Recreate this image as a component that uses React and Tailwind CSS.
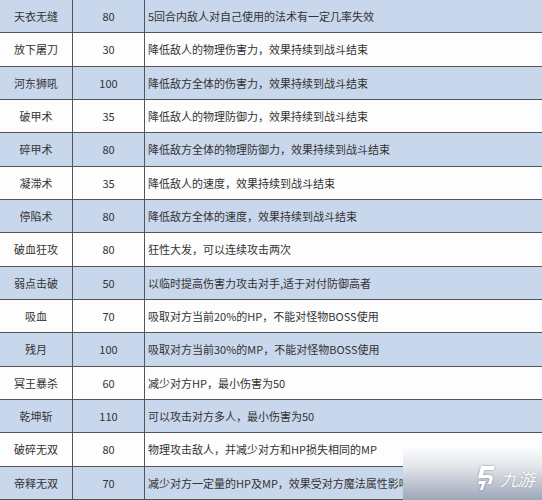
import React from 'react';

const SKILLS = [
  ['天衣无缝', '80', '5回合内敌人对自己使用的法术有一定几率失效'],
  ['放下屠刀', '30', '降低敌人的物理伤害力，效果持续到战斗结束'],
  ['河东狮吼', '100', '降低敌方全体的伤害力，效果持续到战斗结束'],
  ['破甲术', '35', '降低敌人的物理防御力，效果持续到战斗结束'],
  ['碎甲术', '80', '降低敌方全体的物理防御力，效果持续到战斗结束'],
  ['凝滞术', '35', '降低敌人的速度，效果持续到战斗结束'],
  ['停陷术', '80', '降低敌方全体的速度，效果持续到战斗结束'],
  ['破血狂攻', '80', '狂性大发，可以连续攻击两次'],
  ['弱点击破', '50', '以临时提高伤害力攻击对手,适于对付防御高者'],
  ['吸血', '70', '吸取对方当前20%的HP，不能对怪物BOSS使用'],
  ['残月', '100', '吸取对方当前30%的MP，不能对怪物BOSS使用'],
  ['冥王暴杀', '60', '减少对方HP，最小伤害为50'],
  ['乾坤斩', '110', '可以攻击对方多人，最小伤害为50'],
  ['破碎无双', '80', '物理攻击敌人，并减少对方和HP损失相同的MP'],
  ['帝释无双', '70', '减少对方一定量的HP及MP，效果受对方魔法属性影响'],
];

function Watermark() {
  return (
    <div className="absolute left-[403px] top-[445px] w-[139px] h-[55px] bg-linear-to-b from-white via-[#e2e5ea] via-40% to-[#9da7ba]">
      <div className="absolute left-[72px] top-[20px] flex items-center gap-[3px]">
        <svg width="22" height="26" viewBox="0 0 22 26" className="drop-shadow-[0_0_1px_rgba(80,90,110,0.6)]">
          <path d="M6 1 L20 1 L18.5 5 L9.5 5 L8 10 L14 10 Q19 10 17.5 15 L16 19 L13 19 L14.5 14.5 Q15 13 13 13 L3 13 Z" fill="#fff" />
          <path d="M4 16 L11 16 L7.5 25 L5 25 L7 19 L3 19 Z" fill="#fff" />
        </svg>
        <span className="text-[18px] italic text-white font-['Noto_Sans_CJK_SC',sans-serif] leading-none tracking-[-1px] [text-shadow:0_0_1px_rgba(80,90,110,0.7)]">
          九游
        </span>
      </div>
    </div>
  );
}

export default function App() {
  return (
    <div className="relative w-[542px] h-[500px] overflow-hidden bg-white text-[#333] text-[11px] font-['Noto_Sans_CJK_SC','Noto_Sans',sans-serif]">
      <div className="flex flex-col h-[500px]">
        {SKILLS.map(([name, cost, desc], i) => (
          <div
            key={name}
            className={
              'flex flex-1 min-h-0 border-b border-[#555] ' +
              (i % 2 === 0 ? 'bg-[#c8d7eb]' : 'bg-[#fdfdfd]')
            }
          >
            <div className="w-[73px] shrink-0 flex items-center justify-center border-r border-[#555]">
              {name}
            </div>
            <div className="w-[72px] shrink-0 flex items-center justify-center border-r border-[#555]">
              {cost}
            </div>
            <div className="flex-1 flex items-center pl-[3px] whitespace-nowrap overflow-hidden">
              {desc}
            </div>
          </div>
        ))}
      </div>
      <Watermark />
    </div>
  );
}
